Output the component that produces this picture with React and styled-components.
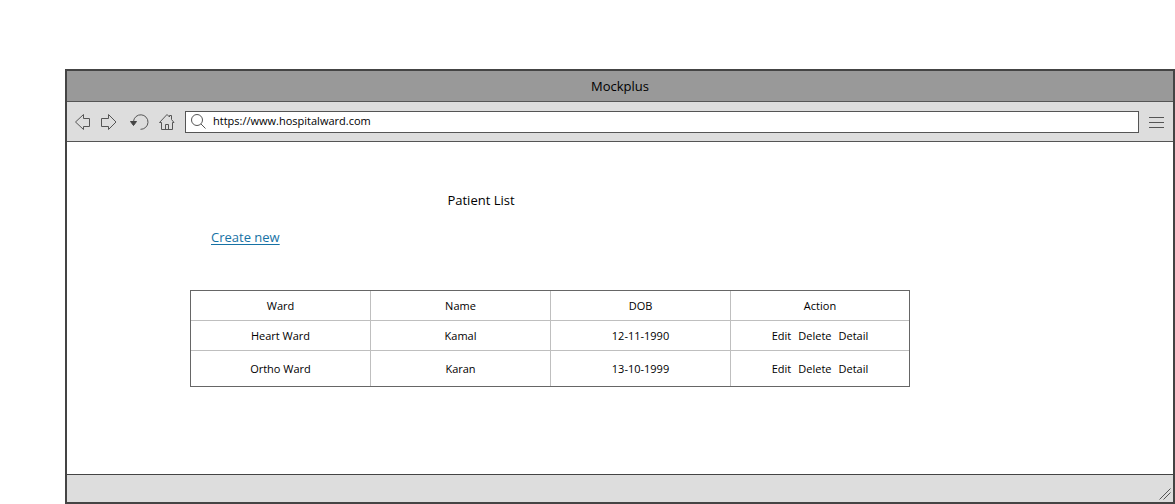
import React from "react";
import styled, { createGlobalStyle } from "styled-components";

const GlobalStyle = createGlobalStyle`
  *, *::before, *::after { box-sizing: border-box; }
  body {
    margin: 0;
    background: #fff;
    color: #000;
    font-family: "Segoe UI", "Open Sans", "Noto Sans", sans-serif;
    font-size: 11px;
    line-height: 16px;
  }
`;

const Page = styled.div`
  display: flex;
  min-height: 100vh;
  padding: 69px 0 0 65px;
`;

const BrowserWindow = styled.div`
  flex: 1;
  min-width: 0;
  display: flex;
  flex-direction: column;
  border: 2px solid #444;
  background: #fff;
`;

const TitleBar = styled.header`
  display: flex;
  align-items: center;
  justify-content: center;
  height: 31px;
  border-bottom: 1px solid #555;
  background: #999;
  font-size: 13px;
`;

const Toolbar = styled.nav`
  display: flex;
  align-items: center;
  gap: 10px;
  height: 40px;
  padding: 0 8px;
  border-bottom: 1px solid #555;
  background: #ddd;
`;

const NavButtons = styled.div`
  display: flex;
  gap: 10px;
`;

const IconButton = styled.button`
  display: flex;
  width: ${({ $wide }) => ($wide ? 22 : 16)}px;
  height: 16px;
  padding: 0;
  border: 0;
  background: none;
  cursor: pointer;
`;

const Icon = styled.svg`
  display: block;
  flex: none;
  fill: none;
  stroke: #555;
  stroke-width: 1;
`;

const AddressBar = styled.label`
  flex: 1;
  min-width: 0;
  display: flex;
  align-items: center;
  gap: 7px;
  height: 22px;
  padding: 0 5px;
  border: 1px solid #555;
  background: #fff;
`;

const AddressInput = styled.input`
  flex: 1;
  min-width: 0;
  height: 20px;
  padding: 0 0 2px;
  border: 0;
  outline: 0;
  background: none;
  color: inherit;
  font: inherit;
`;

const Content = styled.main`
  flex: 1;
  padding: 48px 24px 48px 123px;
`;

const Heading = styled.h1`
  max-width: 582px;
  margin: 0;
  text-align: center;
  font-size: 13px;
  font-weight: 400;
  line-height: 20px;
`;

const CreateLink = styled.a`
  display: inline-block;
  margin: 17px 21px 43px;
  color: #1672a5;
  font-size: 13px;
  line-height: 20px;
  text-underline-offset: 2px;
`;

const PatientTable = styled.table`
  width: 100%;
  max-width: 720px;
  table-layout: fixed;
  border: 1px solid #666;
  border-collapse: separate;
  border-spacing: 0;
`;

const Column = styled.col`
  width: ${({ $fill }) => ($fill ? "auto" : "180px")};
`;

const Row = styled.tr`
  height: ${({ $tall }) => ($tall ? 35 : 30)}px;

  & > * {
    padding: 0;
    border-right: 1px solid #bfbfbf;
    border-bottom: 1px solid #bfbfbf;
    text-align: center;
    vertical-align: middle;
    font-weight: 400;
  }
  & > *:last-child { border-right: 0; }
  tbody > &:last-child > * { border-bottom: 0; }
`;

const Actions = styled.div`
  display: flex;
  justify-content: center;
  gap: 7px;
`;

const ActionButton = styled.button`
  padding: 0;
  border: 0;
  background: none;
  color: inherit;
  font: inherit;
  cursor: pointer;
`;

const StatusBar = styled.footer`
  display: flex;
  align-items: flex-end;
  justify-content: flex-end;
  height: 28px;
  padding: 2px;
  border-top: 1px solid #444;
  background: #ddd;
`;

const patients = [
  { ward: "Heart Ward", name: "Kamal", dob: "12-11-1990" },
  { ward: "Ortho Ward", name: "Karan", dob: "13-10-1999" },
];

export default function App() {
  return (
    <>
      <GlobalStyle />
      <Page>
        <BrowserWindow>
          <TitleBar>Mockplus</TitleBar>
          <Toolbar>
            <NavButtons>
              <IconButton aria-label="Back">
                <Icon width="16" height="16" viewBox="0 0 16 16">
                  <path d="M.5 8 8.5.5V4.5H14.5V12.5H8.5V15.5Z" />
                </Icon>
              </IconButton>
              <IconButton aria-label="Forward">
                <Icon width="16" height="16" viewBox="0 0 16 16">
                  <path d="M15 8 7.5.5V4.5H.5V12.5H7.5V15.5Z" />
                </Icon>
              </IconButton>
              <IconButton $wide aria-label="Reload">
                <Icon width="22" height="16" viewBox="0 0 22 16">
                  <path d="M6.5 7.5A7.25 7.25 0 1 1 13.5 15.3" />
                  <path d="M3.5 7.5H9.5L6.5 11.5Z" fill="#444" stroke="#444" />
                </Icon>
              </IconButton>
              <IconButton aria-label="Home">
                <Icon width="16" height="16" viewBox="0 0 16 16">
                  <path d="M.5 8.5 8 .5 10.5 3V1.5H12.5V5.5L15 8.5H13.5V15.5H2.5V8.5ZM6.5 15.5V10.5H9.5V15.5" />
                </Icon>
              </IconButton>
            </NavButtons>
            <AddressBar>
              <Icon width="15" height="15" viewBox="0 0 15 15">
                <circle cx="6" cy="6" r="5.5" />
                <path d="M10 10 14.5 14.5" />
              </Icon>
              <AddressInput
                aria-label="Address"
                defaultValue="https://www.hospitalward.com"
              />
            </AddressBar>
            <IconButton aria-label="Menu">
              <Icon width="16" height="16" viewBox="0 0 16 16">
                <path d="M0 3.5H15M0 8.5H15M0 13.5H15" />
              </Icon>
            </IconButton>
          </Toolbar>
          <Content>
            <Heading>Patient List</Heading>
            <CreateLink href="#new">Create new</CreateLink>
            <PatientTable>
              <colgroup>
                <Column />
                <Column />
                <Column />
                <Column $fill />
              </colgroup>
              <thead>
                <Row>
                  <th scope="col">Ward</th>
                  <th scope="col">Name</th>
                  <th scope="col">DOB</th>
                  <th scope="col">Action</th>
                </Row>
              </thead>
              <tbody>
                {patients.map((patient, index) => (
                  <Row key={patient.name} $tall={index === patients.length - 1}>
                    <td>{patient.ward}</td>
                    <td>{patient.name}</td>
                    <td>{patient.dob}</td>
                    <td>
                      <Actions>
                        <ActionButton>Edit</ActionButton>
                        <ActionButton>Delete</ActionButton>
                        <ActionButton>Detail</ActionButton>
                      </Actions>
                    </td>
                  </Row>
                ))}
              </tbody>
            </PatientTable>
          </Content>
          <StatusBar>
            <Icon width="12" height="12" viewBox="0 0 12 12">
              <path d="M.5 11.5 11.5 .5M4.5 11.5 11.5 4.5" />
            </Icon>
          </StatusBar>
        </BrowserWindow>
      </Page>
    </>
  );
}
